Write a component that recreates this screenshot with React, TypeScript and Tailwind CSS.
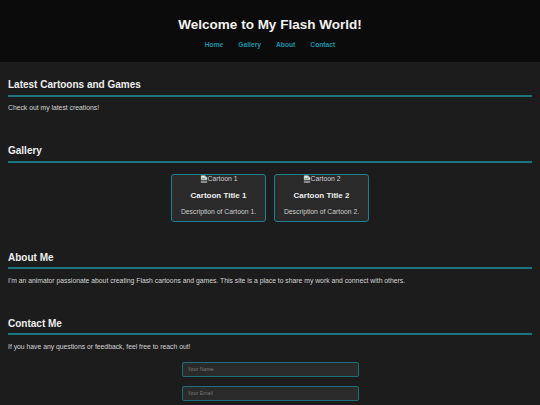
import React from 'react';

const cartoons = [
  { id: 1, alt: 'Cartoon 1', title: 'Cartoon Title 1', desc: 'Description of Cartoon 1.' },
  { id: 2, alt: 'Cartoon 2', title: 'Cartoon Title 2', desc: 'Description of Cartoon 2.' },
];

const BrokenImage = () => (
  <svg width="8" height="8" viewBox="0 0 16 16" className="shrink-0">
    <path d="M2 1h8l4 4v4l-2 2-2-2-2 2-2-2-2 2-2-2z" fill="#e8e8e8" stroke="#8a8a8a" strokeWidth="1" />
    <path d="M2 12l2 2 2-2 2 2 2-2 2 2 2-2v3H2z" fill="#e8e8e8" stroke="#8a8a8a" strokeWidth="1" />
    <path d="M3 8l2.5-3 2 2 1.5-1.5 2 2.5z" fill="#4caf50" />
    <circle cx="10" cy="4" r="1.2" fill="#3b82c4" />
  </svg>
);

const SectionTitle = ({ children }: { children: React.ReactNode }) => (
  <h2 className="text-[10px] leading-[12px] font-bold text-[#eeeeee] pb-[3.5px] border-b-2 border-[#1b7583]">
    {children}
  </h2>
);

export default function App() {
  return (
    <div className="min-h-screen bg-[#1c1c1c] font-['Liberation_Sans',Arial,sans-serif] text-[#d4d4d4]">
      <header className="bg-[#0b0b0b] h-[62px] flex flex-col items-center pt-[17px]">
        <h1 className="text-[13.5px] leading-[16px] font-bold text-[#f2f2f2]">Welcome to My Flash World!</h1>
        <nav className="mt-[8px] flex gap-[15px] text-[6.7px] leading-[8px] font-bold text-[#1b93a8]">
          <a href="#home">Home</a>
          <a href="#gallery">Gallery</a>
          <a href="#about">About</a>
          <a href="#contact">Contact</a>
        </nav>
      </header>

      <main className="px-[8px] pt-[17px] pb-[30px]">
        <section>
          <SectionTitle>Latest Cartoons and Games</SectionTitle>
          <p className="mt-[7.5px] text-[6.8px] leading-[8px]">Check out my latest creations!</p>
        </section>

        <section className="mt-[33px]">
          <SectionTitle>Gallery</SectionTitle>
          <div className="mt-[11px] flex justify-center gap-[8px]">
            {cartoons.map((c) => (
              <div
                key={c.id}
                className="w-[95px] h-[48px] flex flex-col items-center bg-[#2a2a2a] border border-[#1d8090] rounded-[3px]"
              >
                <div className="flex items-center text-[6.8px] leading-[6px] text-[#cfcfcf]">
                  <BrokenImage />
                  <span>{c.alt}</span>
                </div>
                <h3 className="mt-[8px] text-[8px] leading-[10px] font-bold text-[#eeeeee]">{c.title}</h3>
                <p className="mt-[7.4px] text-[6.8px] leading-[8px] text-[#cccccc]">{c.desc}</p>
              </div>
            ))}
          </div>
        </section>

        <section className="mt-[30px]">
          <SectionTitle>About Me</SectionTitle>
          <p className="mt-[7.5px] text-[6.8px] leading-[8px]">
            I'm an animator passionate about creating Flash cartoons and games. This site is a place to share my work and connect with others.
          </p>
        </section>

        <section className="mt-[33px]">
          <SectionTitle>Contact Me</SectionTitle>
          <p className="mt-[7.5px] text-[6.8px] leading-[8px]">If you have any questions or feedback, feel free to reach out!</p>
          <form className="mt-[11px] flex flex-col items-center gap-[9px]">
            <input
              type="text"
              placeholder="Your Name"
              className="w-[177px] h-[15px] px-[5px] bg-[#2a2a2a] border border-[#1b6f7c] rounded-[2px] text-[5.3px] text-[#dddddd] placeholder:text-[#777777] outline-none"
            />
            <input
              type="email"
              placeholder="Your Email"
              className="w-[177px] h-[15px] px-[5px] bg-[#2a2a2a] border border-[#1b6f7c] rounded-[2px] text-[5.3px] text-[#dddddd] placeholder:text-[#777777] outline-none"
            />
            <textarea
              placeholder="Your Message"
              className="w-[177px] h-[40px] px-[5px] py-[4px] bg-[#2a2a2a] border border-[#1b6f7c] rounded-[2px] text-[5.3px] text-[#dddddd] placeholder:text-[#777777] outline-none resize-none"
            />
            <button type="button" className="px-[8px] py-[3px] bg-[#1b93a8] text-white text-[6.8px] font-bold rounded-[2px]">
              Send
            </button>
          </form>
        </section>
      </main>
    </div>
  );
}
